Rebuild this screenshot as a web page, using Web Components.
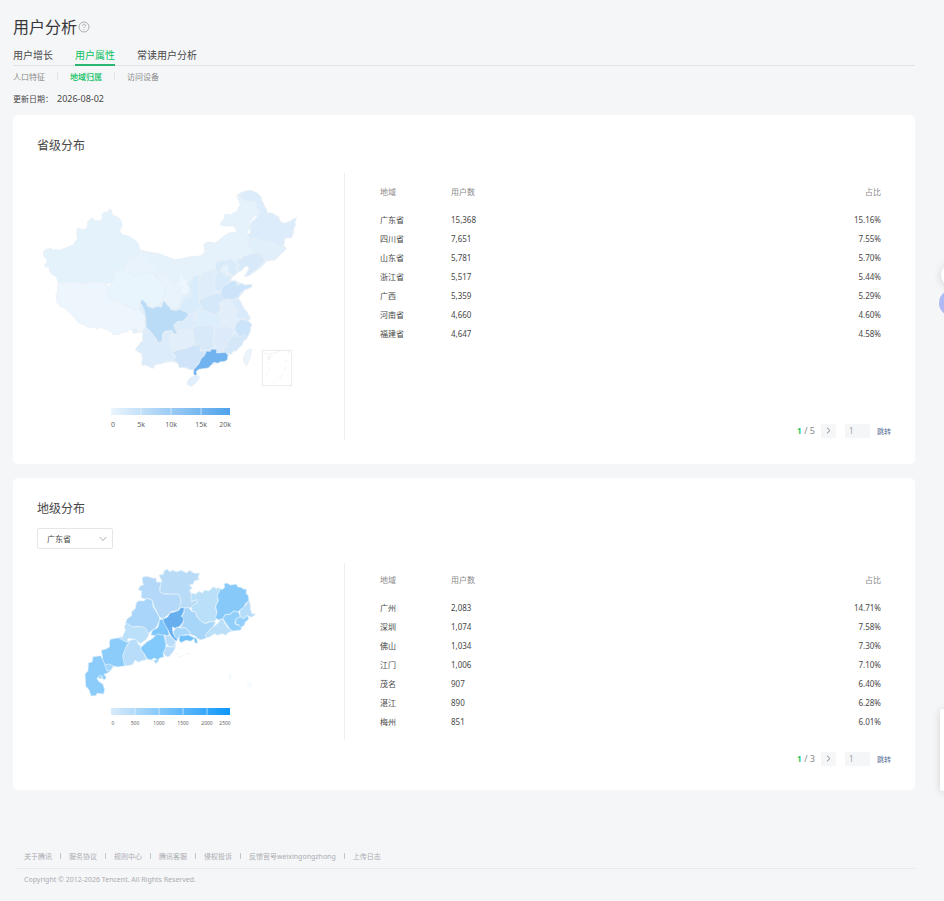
<!DOCTYPE html>
<html lang="zh-CN">
<head>
<meta charset="utf-8">
<title>用户分析</title>
<style>
  body {
    margin: 0;
    min-height: 100vh;
    overflow-x: hidden;
    background: #f5f6f8;
    color: #484848;
    font-family: "Noto Sans", "Noto Sans CJK SC", sans-serif;
    font-size: 8px;
  }
</style>
</head>
<body>
<analysis-page>
  <page-header slot="header"></page-header>

  <data-card heading="省级分布">
    <china-map slot="map"></china-map>
    <map-legend slot="map" labels="0,5k,10k,15k,20k" from="#ebf5fd" to="#4ea2eb" size="7"></map-legend>
    <region-table id="province"></region-table>
    <page-turner total="5"></page-turner>
  </data-card>

  <data-card heading="地级分布" compact>
    <province-select slot="filter"></province-select>
    <guangdong-map slot="map"></guangdong-map>
    <map-legend slot="map" labels="0,500,1000,1500,2000,2500" from="#d9ebf9" to="#0d96fb" size="5"></map-legend>
    <region-table id="city"></region-table>
    <page-turner total="3"></page-turner>
  </data-card>

  <page-footer slot="footer"></page-footer>
</analysis-page>
<side-tools></side-tools>

<script>
class BaseElement extends HTMLElement {
  constructor() {
    super();
    this.attachShadow({ mode: 'open' });
  }

  connectedCallback() {
    const template = document.createElement('template');
    template.innerHTML = `<style>${this.getStyles()}</style>${this.getTemplate()}`;
    this.shadowRoot.replaceChildren(template.content.cloneNode(true));
  }
}

class AnalysisPage extends BaseElement {
  getStyles() {
    return `
      :host { display: block; padding: 14px 29px 14px 13px; }
      main { display: flex; flex-direction: column; gap: 14px; }
    `;
  }
  getTemplate() {
    return `
      <slot name="header"></slot>
      <main><slot></slot></main>
      <slot name="footer"></slot>
    `;
  }
}

class PageHeader extends BaseElement {
  getStyles() {
    return `
      :host { display: block; }
      h1 { display: flex; align-items: center; gap: 1px; margin: 0; font-size: 16px; line-height: 26px; font-weight: 400; color: #383838; }
      h1 svg { width: 12px; height: 12px; }
      a { color: inherit; text-decoration: none; }
      .tabs { display: flex; gap: 22px; margin-top: 6px; border-bottom: 1px solid #e0e3e7; font-size: 10px; line-height: 18px; }
      .tabs a { height: 18px; margin-bottom: -1px; border-bottom: 2px solid transparent; }
      .tabs .on { color: #07c160; border-color: #2bb673; }
      .sub { display: flex; align-items: center; gap: 12px; height: 20px; color: #8a8a8a; }
      .sub i { width: 1px; height: 8px; background: #e2e4e7; }
      .sub .on { color: #07c160; font-weight: 500; }
      p { display: flex; gap: 4px; margin: 0 0 9px; padding-top: 6px; line-height: 14px; }
      time { font-size: 9px; }
    `;
  }
  getTemplate() {
    return `
      <h1>用户分析
        <svg viewBox="0 0 12 12" fill="none" stroke="#9a9a9a" stroke-width=".8">
          <circle cx="6" cy="6" r="5"/>
          <path d="M4.5 4.8C4.5 2.7 7.5 2.8 7.5 4.6C7.5 5.7 6 5.8 6 7.1M6 8v.9"/>
        </svg>
      </h1>
      <nav class="tabs">
        <a href="#growth">用户增长</a>
        <a href="#attr" class="on">用户属性</a>
        <a href="#reader">常读用户分析</a>
      </nav>
      <nav class="sub">
        <a href="#people">人口特征</a><i></i>
        <a href="#area" class="on">地域归属</a><i></i>
        <a href="#device">访问设备</a>
      </nav>
      <p><span>更新日期：</span><time datetime="2026-08-02">2026-08-02</time></p>
    `;
  }
}

class DataCard extends BaseElement {
  getStyles() {
    return `
      :host { display: block; padding: 19px 24px 24px; border-radius: 5px; background: #fff; }
      h2 { margin: 0; font-size: 12px; line-height: 24px; font-weight: 400; }
      .filter { padding: 7px 0 14px; }
      :host(:not([compact])) .filter { padding: 15px 0 0; }
      .body { display: grid; grid-template-columns: 308px 1fr; min-height: 267px; }
      .map { border-right: 1px solid #eceef0; }
      .list { display: flex; flex-direction: column; justify-content: space-between; padding: 9px 0 2px 35px; }
      :host([compact]) .body { min-height: 0; align-items: start; }
      :host([compact]) .map { height: 177px; }
      :host([compact]) .list { gap: 20px; padding: 7px 0 0 35px; }
    `;
  }
  getTemplate() {
    return `
      <h2>${this.getAttribute('heading')}</h2>
      <div class="filter"><slot name="filter"></slot></div>
      <div class="body">
        <div class="map"><slot name="map"></slot></div>
        <div class="list"><slot></slot></div>
      </div>
    `;
  }
}

class ProvinceSelect extends BaseElement {
  getStyles() {
    return `
      :host { display: block; }
      label { display: inline-grid; vertical-align: top; align-items: center; }
      select, svg { grid-area: 1 / 1; }
      select { width: 76px; height: 21px; padding: 0 9px; border: 1px solid #e4e6e9; border-radius: 2px; background: #fff; color: inherit; font: inherit; appearance: none; }
      svg { justify-self: end; width: 8px; height: 6px; margin-right: 6px; pointer-events: none; }
    `;
  }
  getTemplate() {
    return `
      <label>
        <select aria-label="省份"><option>广东省</option></select>
        <svg viewBox="0 0 8 6" fill="none" stroke="#a2a4a8" stroke-width=".9"><path d="M.7 1L4 4.5L7.3 1"/></svg>
      </label>
    `;
  }
}

const tables = {
  province: [
    ['广东省', '15,368', '15.16%'],
    ['四川省', '7,651', '7.55%'],
    ['山东省', '5,781', '5.70%'],
    ['浙江省', '5,517', '5.44%'],
    ['广西', '5,359', '5.29%'],
    ['河南省', '4,660', '4.60%'],
    ['福建省', '4,647', '4.58%'],
  ],
  city: [
    ['广州', '2,083', '14.71%'],
    ['深圳', '1,074', '7.58%'],
    ['佛山', '1,034', '7.30%'],
    ['江门', '1,006', '7.10%'],
    ['茂名', '907', '6.40%'],
    ['湛江', '890', '6.28%'],
    ['梅州', '851', '6.01%'],
  ],
};

class RegionTable extends BaseElement {
  getStyles() {
    return `
      :host { display: block; padding-right: 10px; }
      table { width: 100%; border-collapse: collapse; table-layout: fixed; line-height: 19px; }
      th, td { padding: 0; text-align: left; font-weight: 400; }
      th { padding-bottom: 9px; color: #8a8a8a; }
      th:first-child { width: 71px; }
      th:last-child, td:last-child { text-align: right; }
    `;
  }
  getTemplate() {
    const rows = tables[this.id].map(row => `<tr>${row.map(cell => `<td>${cell}</td>`).join('')}</tr>`);
    return `
      <table>
        <thead><tr><th>地域</th><th>用户数</th><th>占比</th></tr></thead>
        <tbody>${rows.join('')}</tbody>
      </table>
    `;
  }
}

class PageTurner extends BaseElement {
  getStyles() {
    return `
      :host { display: flex; align-items: center; justify-content: flex-end; height: 15px; color: #8a8a8a; }
      b { color: #07c160; font-weight: 600; }
      span { margin-right: 6px; font-size: 9px; }
      button { padding: 0; border: 0; background: none; font: inherit; }
      .next { display: grid; place-items: center; width: 15px; height: 14px; margin-right: 9px; background: #f5f6f8; }
      svg { width: 5px; height: 7px; }
      input { box-sizing: border-box; width: 25px; height: 14px; margin-right: 7px; padding: 0 4px; border: 0; background: #f5f6f8; color: #a5a5a5; font: inherit; }
      .go { color: #576b95; font-size: 7px; }
    `;
  }
  getTemplate() {
    return `
      <span><b>1</b> / ${this.getAttribute('total')}</span>
      <button class="next" aria-label="下一页">
        <svg viewBox="0 0 5 7" fill="none" stroke="#8a8a8a"><path d="M1 .8L4 3.5L1 6.2"/></svg>
      </button>
      <input value="1" aria-label="页码">
      <button class="go">跳转</button>
    `;
  }
}

class MapLegend extends BaseElement {
  getStyles() {
    return `
      :host { display: block; padding: 5px 0 0 74px; }
      svg { display: block; overflow: visible; }
      text { fill: #666; text-anchor: middle; font-family: "Noto Sans", sans-serif; font-size: ${this.getAttribute('size')}px; }
    `;
  }
  getTemplate() {
    const labels = this.getAttribute('labels').split(',');
    const step = 120 / (labels.length - 1);
    const texts = labels.map((label, i) => {
      // the outer labels stay inside the bar
      const x = Math.min(Math.max(i * step, 2), 114);
      return `<text x="${x}" y="${this.getAttribute('size') === '7' ? 19 : 17}">${label}</text>`;
    });
    const ticks = labels.slice(1, -1).map((_, i) => `M${(i + 1) * step} 0v7`);
    return `
      <svg width="120" height="24">
        <defs>
          <linearGradient id="g">
            <stop stop-color="${this.getAttribute('from')}"/>
            <stop offset="1" stop-color="${this.getAttribute('to')}"/>
          </linearGradient>
        </defs>
        <rect width="119" height="7" fill="url(#g)"/>
        <path d="${ticks.join('')}" stroke="#fff" stroke-opacity=".55"/>
        ${texts.join('')}
      </svg>
    `;
  }
}

class ChinaMap extends BaseElement {
  getStyles() {
    return `
      :host { display: block; height: 230px; }
      svg { display: block; width: 300px; height: 230px; }
      path { stroke: #e8eef4; stroke-width: 2; stroke-linejoin: round; }
      .frame path, .frame rect { fill: none; stroke: #ebebeb; }
    `;
  }
  getTemplate() {
    return `
      <svg viewBox="21 -21 900 690" role="img" aria-label="省级分布地图">
        <!-- mainland base -->
        <path fill="#e0effb" d="M333 212L390 222L435 240L480 231L515 228L525 215L522 192L538 186L555 190L580 170L595 160L620 155L700 170L765 200L770 205L735 240L710 243L690 265L660 285L645 288L657 262L648 258L615 285L605 293L602 303L620 303L640 315L665 316L662 322L645 330L625 355L645 390L663 415L655 422L665 435L660 455L645 475L635 495L610 515L595 525L590 540L560 550L500 570L475 568L428 543L373 555L335 555L338 525L318 510L325 495L338 485L338 455L310 460L250 280Z"/>
        <!-- west -->
        <path fill="#e4f2fc" d="M40 217L48 208L62 204L68 210L80 208L85 211L115 201L133 192L134 185L143 176L140 162L142 145L150 144L158 149L168 146L173 137L172 128L179 119L186 113L193 121L209 123L216 117L216 103L224 96L233 98L236 89L244 90L246 101L252 108L263 110L272 119L277 135L269 151L275 163L298 169L315 181L325 191L328 204L333 212L320 228L299 235L286 252L288 260L275 269L252 275L250 285L257 293L247 308L230 311L205 305L182 306L162 312L145 307L120 306L98 311L86 310L79 290L63 281L57 268L57 261L47 261L43 252L51 249L50 237L41 229Z"/>
        <path fill="#edf5fd" d="M86 310L98 313L120 308L145 309L162 314L182 308L205 307L230 313L234 322L233 350L241 359L262 365L278 376L300 382L310 391L325 385L333 397L343 405L347 440L338 450L336 457L323 455L318 447L300 448L291 456L278 457L266 464L249 463L244 455L225 448L210 441L202 449L197 443L173 441L162 434L146 429L137 418L133 410L119 400L103 383L91 380L79 364L81 355L76 348L84 335L82 321Z"/>
        <path fill="#e9f5fd" d="M252 275L275 269L300 281L320 290L345 280L369 277L375 290L389 300L390 309L407 320L404 345L393 365L382 382L366 384L359 379L345 370L341 360L331 362L328 383L318 391L300 381L279 374L263 363L240 358L233 350L234 321L247 308L257 293L250 285Z"/>
        <path fill="#e8f3fc" d="M333 212L346 215L354 229L350 240L360 250L379 251L382 265L375 275L394 281L412 287L418 304L425 300L437 317L450 316L453 339L461 350L451 360L447 380L430 390L419 382L403 362L394 372L404 345L407 320L390 309L389 300L369 277L345 280L320 290L300 281L275 269L288 260L286 252L299 235L320 228Z"/>
        <path fill="#e5f2fc" d="M335 212L359 219L390 222L402 231L422 237L440 242L480 230L514 228L525 215L523 198L529 187L538 190L555 190L567 183L580 170L595 160L611 161L620 155L614 141L605 137L590 139L572 136L573 126L583 115L585 102L604 104L610 98L622 94L625 82L631 76L624 58L621 46L633 38L657 31L678 39L690 56L686 69L693 78L685 95L687 105L673 109L661 126L660 145L650 158L664 169L651 180L653 191L670 200L677 216L669 221L650 226L637 235L624 233L618 245L606 239L590 242L573 246L560 240L558 258L552 270L540 267L526 274L516 287L494 289L477 299L466 320L448 306L438 316L425 300L418 304L412 287L394 281L375 275L382 265L379 251L360 250L350 240L354 229Z"/>
        <path fill="#edf5fe" d="M449 286L457 285L460 296L472 302L470 314L480 323L477 337L463 346L449 337L452 321L437 318L437 311L447 307Z"/>

        <!-- north east -->
        <g transform="translate(390 0)">
          <path fill="#dcecfb" d="M235 44L245 37L271 31L291 38L303 50L304 60L310 67L313 78L319 85L322 98L337 100L352 109L357 111L359 122L370 130L385 126L410 112L405 125L407 135L402 144L400 160L394 174L381 173L373 179L374 190L367 200L351 196L338 189L320 185L306 181L289 176L276 177L263 165L271 158L270 145L274 128L288 113L296 105L298 91L287 81L291 73L285 64L273 66L250 61L242 50Z"/>
          <path fill="#e1effb" d="M261 174L276 177L289 176L306 181L320 185L338 189L351 196L367 200L375 205L372 215L363 211L356 219L353 230L344 233L341 241L334 237L324 242L314 239L306 226L300 224L290 216L282 222L276 205L264 198L268 188Z"/>
          <path fill="#d8eafa" d="M230 240L243 237L250 229L264 226L273 220L282 223L290 216L300 224L306 226L314 239L306 253L295 260L288 270L276 276L270 285L257 290L253 287L263 277L268 265L264 258L254 259L246 271L238 275L233 266L238 253Z"/>
          <path fill="#d8ebfb" d="M170 247L187 240L199 246L204 237L213 238L222 246L231 251L229 266L233 270L225 285L212 286L211 303L198 312L185 319L182 335L163 329L165 309L164 292L173 280L165 264Z"/>
          <path fill="#e5f1fc" d="M187 257L201 255L207 269L203 277L216 282L214 291L206 287L197 290L195 279L183 276L181 266L188 264Z"/>
          <path fill="#dfedfa" d="M124 285L134 276L150 272L162 268L166 282L161 292L163 307L160 327L154 343L136 353L120 359L114 351L117 325L116 305Z"/>
          <path fill="#cce4fa" d="M183 335L188 319L199 313L212 306L219 302L230 306L232 317L245 310L255 315L275 313L275 321L263 326L253 329L242 339L236 350L218 360L206 356L190 359L181 348Z"/>
          <path fill="#d5e8fa" d="M119 360L136 352L153 343L168 341L179 340L184 349L191 357L184 367L176 370L183 382L177 392L175 401L160 403L146 396L130 393L120 380Z"/>
          <path fill="#d9eafa" d="M206 358L218 362L235 355L244 369L251 388L260 393L266 405L269 416L263 419L250 415L237 418L229 413L228 402L235 390L224 379L218 370Z"/>
          <path fill="#e2effb" d="M180 376L190 370L198 374L209 362L218 370L223 382L234 389L227 399L228 412L239 417L231 426L227 439L216 446L205 441L190 442L181 431L184 419L175 410L183 395Z"/>
          <path fill="#cce4fa" d="M231 427L243 418L260 421L272 429L276 437L270 442L272 452L267 463L258 480L246 478L238 472L230 459L224 449L226 438Z"/>
          <path fill="#d9ecfb" d="M91 308L101 290L113 285L118 303L115 322L117 348L119 370L130 393L108 389L98 405L86 402L60 388L62 375L75 358L93 351L94 336L88 319Z"/>
          <path fill="#dcedfb" d="M107 389L130 393L146 396L160 403L175 403L184 419L181 431L189 442L172 447L157 441L128 438L105 444L96 438L107 422L113 407L106 400Z"/>
        </g>

        <!-- south -->
        <g transform="translate(210 300)">
          <path fill="#bbdcf6" d="M121 67L126 57L133 65L139 70L143 79L160 85L171 79L185 82L188 66L194 64L201 75L210 81L211 88L227 92L241 87L247 93L256 95L266 104L260 115L247 124L237 127L234 124L222 134L227 149L233 163L222 161L214 150L203 154L196 152L188 162L187 185L174 188L168 175L158 163L152 156L138 142L137 111L132 88Z"/>
          <path fill="#dcecfb" d="M266 104L279 102L286 112L279 121L289 133L277 144L270 150L245 149L232 157L222 143L224 134L235 126L250 124Z"/>
          <path fill="#dcecfb" d="M132 143L140 143L158 163L174 188L187 185L190 164L203 153L214 152L221 162L212 165L207 176L214 183L210 202L219 212L217 226L230 233L218 246L201 240L184 251L162 252L163 265L148 261L138 254L129 256L125 249L129 235L124 225L128 220L107 211L108 204L119 193L121 186L130 184L128 166L133 158Z"/>
          <path fill="#e2effb" d="M214 165L231 163L233 154L246 149L270 149L271 159L281 165L277 180L281 188L270 201L246 206L224 212L212 202L214 183L206 176Z"/>
          <path fill="#d8e9f9" d="M279 143L294 137L325 135L342 141L341 159L343 169L339 181L342 190L340 202L331 211L310 210L300 214L302 201L290 195L281 181L281 164L276 150Z"/>
          <path fill="#dceafa" d="M342 146L358 141L377 138L398 146L406 144L398 157L396 169L384 179L383 198L370 205L370 216L345 219L342 210L349 202L342 190L339 181L346 168Z"/>
          <path fill="#d5e8fa" d="M406 163L416 170L433 166L438 178L428 186L428 194L416 204L409 214L401 212L393 223L384 222L371 215L371 206L383 199L384 180L397 170Z"/>
          <path fill="#cfe4f8" d="M216 216L230 212L247 207L268 202L279 195L295 195L302 202L300 214L314 212L316 222L304 238L298 251L286 261L284 269L268 268L257 262L238 263L233 247L219 241L230 232Z"/>
          <path fill="#70b3ef" stroke="#8dc2f1" d="M318 213L331 214L334 207L350 208L350 219L362 218L377 217L384 226L382 240L372 245L362 245L353 250L341 247L332 257L325 264L309 266L297 268L289 274L291 286L283 286L280 279L282 268L288 261L297 251L303 236L312 228L317 220Z"/>
          <path fill="#e0effb" d="M269 295L280 288L296 287L299 292L293 302L284 312L276 319L263 315L261 306Z"/>
          <path fill="#ebf4fb" d="M433 224L439 213L452 206L456 211L452 228L444 249L439 258L432 247L429 236Z"/>
          <path fill="none" stroke="#e8e8e8" d="M371 273l2 2M383 278l3 2M475 198l4-1M341 250l8-2"/>
          <g class="frame">
            <rect x="487" y="211" width="88" height="106" stroke-width="3"/>
            <path d="M488 215l14 8l22-4l22-8M503 231l10-3l-4 9l-5 1ZM562 215l8-3l-5 9M560 236l-3 11M557 262l-5 10M546 285l-7 9M525 302l-6 5M500 285l-2 6M509 266l-5 6M505 245l1 7"/>
          </g>
        </g>
      </svg>
    `;
  }
}

class GuangdongMap extends BaseElement {
  getStyles() {
    return `
      :host { display: block; height: 140px; }
      svg { display: block; width: 300px; height: 140px; }
      path { stroke: #e4f1fb; stroke-width: 2; stroke-linejoin: round; }
    `;
  }
  getTemplate() {
    return `
      <svg viewBox="-99 9 900 420" role="img" aria-label="地级分布地图">
        <path fill="#b8dcf7" d="M267 45L280 43L282 33L292 27L298 35L308 31L320 35L334 31L351 39L358 31L373 40L389 39L384 51L387 59L374 62L369 73L358 75L367 84L359 91L366 107L364 125L382 118L380 134L362 143L343 144L333 142L324 151L331 132L333 119L325 102L307 103L290 101L278 102L269 96L271 75L275 62Z"/>
        <path fill="#b4d8f8" d="M218 51L231 49L251 55L257 53L260 66L274 67L269 84L270 96L280 102L307 103L325 102L333 119L331 134L324 151L303 155L289 169L277 177L267 169L259 151L251 138L248 122L237 116L226 117L213 113L215 94L205 89L210 78L220 75L217 61Z"/>
        <path fill="#a8d5f9" d="M207 122L222 123L230 115L247 121L249 140L257 152L268 171L268 184L259 202L245 212L234 221L229 209L217 200L202 199L187 201L166 190L171 177L185 167L184 157L196 145L199 128Z"/>
        <path fill="#badff8" d="M364 99L377 102L386 94L398 99L402 91L418 92L431 80L440 86L447 81L449 94L442 105L444 123L436 139L440 159L438 179L431 186L421 184L405 190L391 183L380 165L377 157L366 153L364 139L382 128L381 119L363 124Z"/>
        <path fill="#87cafa" d="M447 86L458 88L464 81L462 71L471 69L481 75L499 72L504 81L514 82L519 87L530 88L528 100L535 107L537 122L527 130L521 143L510 150L503 157L491 153L480 162L465 164L460 176L445 180L436 173L441 158L437 139L445 122L442 105L449 94Z"/>
        <path fill="#b5dcf8" d="M537 120L540 131L542 150L547 163L555 160L554 166L543 172L531 166L521 176L511 170L509 151L523 141Z"/>
        <path fill="#92d0fb" d="M459 176L465 164L480 163L492 153L506 157L511 170L499 176L494 190L502 196L510 193L516 204L511 211L487 213L478 205L467 189Z"/>
        <path fill="#92d0fb" d="M498 177L511 170L521 176L532 166L537 177L526 186L523 196L512 203L507 194L497 193Z"/>
        <path fill="#badff8" d="M411 219L428 202L445 189L451 178L460 178L464 190L475 205L487 213L474 218L468 226L457 221L441 226L434 221L419 231L407 233L405 224Z"/>
        <path fill="#a8d6f9" d="M341 144L356 143L365 154L377 157L380 169L392 183L406 191L421 185L437 186L430 199L416 213L406 224L409 234L393 240L381 235L376 228L362 224L358 214L345 203L330 204L340 188L334 171L342 158Z"/>
        <path fill="#bae0fa" d="M156 233L166 211L163 197L172 190L188 201L210 199L226 203L237 224L228 239L211 251L194 238L174 235L171 250L147 236L149 229Z"/>
        <path fill="#7fc7fb" d="M268 180L276 177L284 187L292 201L297 219L296 231L284 225L265 230L242 224L248 211L263 203L267 191Z"/>
        <path fill="#67afee" d="M278 178L293 171L300 159L315 155L326 151L333 142L343 144L341 157L334 169L341 176L338 188L329 199L316 205L307 201L309 219L315 229L323 237L319 244L310 237L300 223L294 209L284 193Z"/>
        <path fill="#a7d8fb" d="M310 215L319 202L331 204L345 203L359 215L360 225L345 224L331 228L323 238L314 230Z"/>
        <path fill="#72c1fb" d="M329 226L345 226L356 225L364 229L380 236L383 250L374 248L372 236L362 244L348 241L333 248L327 241Z"/>
        <path fill="#b9ddfa" d="M285 228L299 226L314 239L317 248L308 261L296 258L289 252Z"/>
        <path fill="#b9ddfa" d="M289 259L309 262L317 247L315 266L307 278L298 289L289 290L280 279Z"/>
        <path fill="#82c9fc" d="M211 264L230 246L245 237L262 222L282 226L288 252L287 264L279 280L282 291L270 294L263 300L253 294L243 300L231 297L222 280L215 274Z"/>
        <path fill="#b8ddfa" d="M177 246L185 239L199 239L205 253L212 258L213 272L222 280L230 299L215 302L205 307L195 300L188 314L167 318L160 311L158 287L164 270Z"/>
        <path fill="#8bccfb" d="M121 238L145 233L170 247L181 240L171 255L164 271L158 288L164 318L143 321L130 318L123 330L109 322L98 303L97 289L94 271L110 266L119 260L118 247Z"/>
        <path fill="#8bccfb" d="M55 308L66 306L69 290L92 287L98 299L109 322L123 332L109 341L102 342L109 353L102 361L95 350L81 355L86 364L99 373L104 389L101 402L81 400L78 407L63 408L57 389L47 379L45 342L54 332Z"/>
        <path fill="#a4d7fb" d="M82 353L89 347L98 348L94 357ZM104 315L117 312L130 318L125 328L111 334ZM242 302L251 301L257 311L264 306L268 298"/>
        <path fill="none" stroke="#ddd" stroke-width="1.5" d="M318 283l10-6M327 291l16-5M346 279l14 3M474 347l8-2l-2 14l-4-2M530 373l12-3l1 10l-11 2M326 268l7-3"/>
      </svg>
    `;
  }
}

class PageFooter extends BaseElement {
  getStyles() {
    return `
      :host { display: block; margin: 60px 0 0 3px; color: #aaacb0; font-size: 7px; }
      nav { display: flex; gap: 8px; padding: 0 8px 4px; border-bottom: 1px solid #e7e9eb; line-height: 14px; }
      a { color: inherit; text-decoration: none; }
      i { width: 1px; height: 6px; margin-top: 3px; background: #c5c7ca; }
      p { margin: 4px 8px 0; line-height: 14px; }
    `;
  }
  getTemplate() {
    const links = ['关于腾讯', '服务协议', '规则中心', '腾讯客服', '侵权投诉', '反馈官号weixingongzhong', '上传日志'];
    return `
      <nav>${links.map(text => `<a href="#">${text}</a>`).join('<i></i>')}</nav>
      <p>Copyright © 2012-2026 Tencent. All Rights Reserved.</p>
    `;
  }
}

// Floating tools that peek in from the right edge
class SideTools extends BaseElement {
  getStyles() {
    return `
      :host { position: absolute; top: 0; right: 0; width: 16px; height: 100%; min-height: 830px; overflow: hidden; pointer-events: none; }
      div { position: absolute; background: #fff; box-shadow: 0 1px 8px rgba(0, 0, 0, .14); }
      .top { top: 263px; left: 13px; width: 24px; height: 24px; border-radius: 50%; }
      .chat { top: 290px; left: 11px; width: 26px; height: 26px; border-radius: 50%; background: linear-gradient(#a9bdf8, #b5b6f2); box-shadow: none; }
      .panel { top: 709px; left: 12px; width: 30px; height: 82px; border-radius: 3px; }
    `;
  }
  getTemplate() {
    return `<div class="top"></div><div class="chat"></div><div class="panel"></div>`;
  }
}

customElements.define('page-header', PageHeader);
customElements.define('data-card', DataCard);
customElements.define('province-select', ProvinceSelect);
customElements.define('region-table', RegionTable);
customElements.define('page-turner', PageTurner);
customElements.define('map-legend', MapLegend);
customElements.define('china-map', ChinaMap);
customElements.define('guangdong-map', GuangdongMap);
customElements.define('page-footer', PageFooter);
customElements.define('side-tools', SideTools);
customElements.define('analysis-page', AnalysisPage);
</script>
</body>
</html>
